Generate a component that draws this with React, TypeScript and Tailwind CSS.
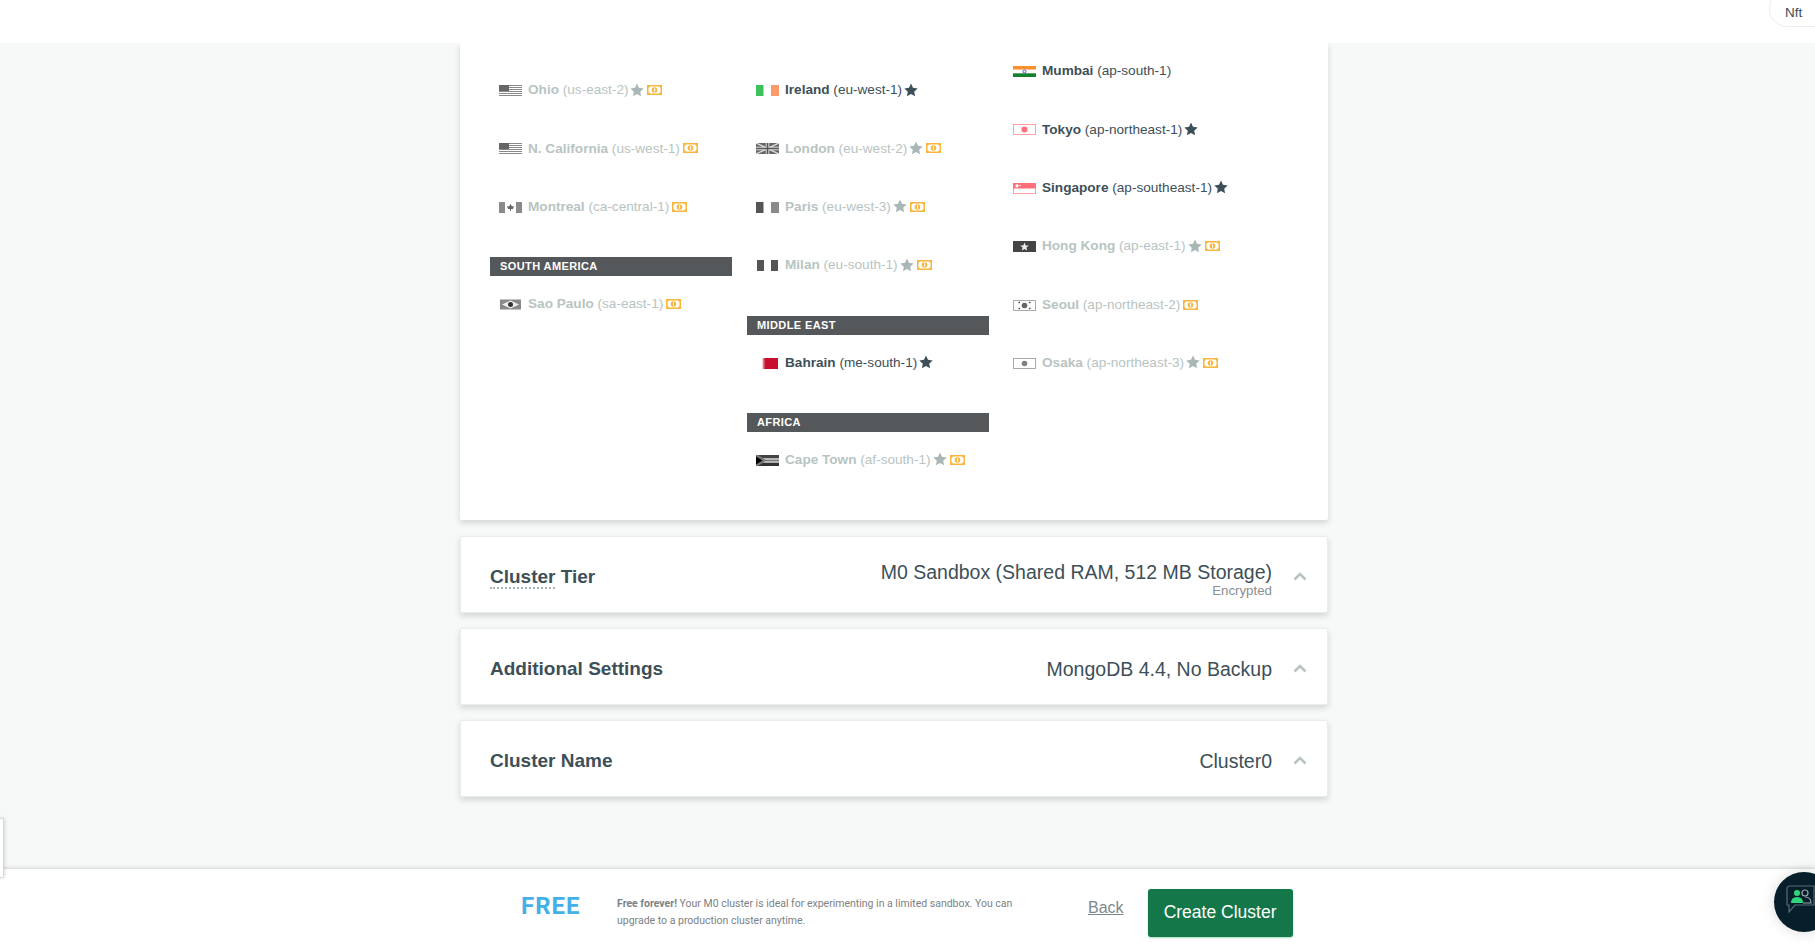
const GREY = '#8a8a8a'
const DARK = '#555555'

const Flag = ({ name }: { name: string }) => {
  const art: Record<string, React.ReactNode> = {
    us: (
      <>
        <rect width="23" height="11" fill="#fff" />
        {[0, 2, 4, 6, 8, 10].map((y) => <rect key={y} y={y} width="23" height="1" fill={GREY} />)}
        <rect width="10" height="6" fill="#666" />
      </>
    ),
    ca: (
      <>
        <rect width="6" height="11" fill={GREY} />
        <rect x="17" width="6" height="11" fill={GREY} />
        <path d="M11.5 2 L13 4.5 L15 4 L14 7 L12 7 L12 9 L11 9 L11 7 L9 7 L8 4 L10 4.5 Z" fill="#666" />
      </>
    ),
    br: (
      <>
        <rect x="1" y="0.5" width="21" height="10" fill={GREY} />
        <path d="M11.5 1.5 L20 5.5 L11.5 9.5 L3 5.5 Z" fill="#eee" />
        <circle cx="11.5" cy="5.5" r="2.5" fill="#333" />
      </>
    ),
    ie: (
      <>
        <rect width="7.5" height="11" fill="#3ec15c" />
        <rect x="15" width="8" height="11" fill="#fd9a6c" />
      </>
    ),
    uk: (
      <>
        <rect width="23" height="11" fill="#666" />
        <path d="M0 0 L23 11 M23 0 L0 11" stroke="#ddd" strokeWidth="1.4" />
        <path d="M11.5 0 V11 M0 5.5 H23" stroke="#ddd" strokeWidth="3.5" />
        <path d="M11.5 0 V11 M0 5.5 H23" stroke="#555" strokeWidth="1.6" />
      </>
    ),
    fr: (
      <>
        <rect width="7.5" height="11" fill={DARK} />
        <rect x="15" width="8" height="11" fill={GREY} />
      </>
    ),
    it: (
      <>
        <rect x="1" width="7" height="11" fill={DARK} />
        <rect x="15" width="7" height="11" fill={DARK} />
      </>
    ),
    bh: (
      <>
        <rect x="8" y="0" width="14" height="11" fill="#c8102e" />
        <path d="M6 0 L8 1 L6 2 L8 3 L6 4 L8 5 L6 6 L8 7 L6 8 L8 9 L6 10 L8 11 L9 11 L9 0 Z" fill="#d8475c" />
      </>
    ),
    za: (
      <>
        <rect width="23" height="11" fill="#fff" />
        <rect width="23" height="3.4" fill="#444" />
        <rect y="7.6" width="23" height="3.4" fill="#333" />
        <path d="M0 0 L2 0 L9 4.4 H23 V6.6 H9 L2 11 H0 Z" fill="#777" />
        <path d="M0 1.5 L6.5 5.5 L0 9.5 Z" fill="#000" />
      </>
    ),
    in: (
      <>
        <rect width="23" height="3.7" fill="#fb8f2c" />
        <rect y="3.7" width="23" height="3.6" fill="#fff" />
        <rect y="7.3" width="23" height="3.7" fill="#15812d" />
        <circle cx="11.5" cy="5.5" r="1.5" fill="none" stroke="#3440c9" strokeWidth="0.9" />
      </>
    ),
    jp: (
      <>
        <rect x="0.5" y="0.5" width="22" height="10" fill="#fff" stroke="#ff9ea3" />
        <circle cx="11.5" cy="5.5" r="3" fill="#ff6f78" />
      </>
    ),
    sg: (
      <>
        <rect x="0.5" y="0.5" width="22" height="10" fill="#fff" stroke="#ff9ea3" />
        <rect width="23" height="5.5" fill="#ff7078" />
        <circle cx="4" cy="2.8" r="1.6" fill="#fff" />
        <circle cx="7" cy="2.5" r="0.7" fill="#fff" />
      </>
    ),
    hk: (
      <>
        <rect width="23" height="11" fill="#444" />
        <path d="M11.5 1.5 L12.7 4.5 L15.8 4.6 L13.4 6.6 L14.2 9.5 L11.5 7.9 L8.8 9.5 L9.6 6.6 L7.2 4.6 L10.3 4.5 Z" fill="#eee" />
      </>
    ),
    kr: (
      <>
        <rect x="0.5" y="0.5" width="22" height="10" fill="#fff" stroke="#aaa" />
        <circle cx="11.5" cy="5.5" r="2.8" fill="#666" />
        <path d="M5.5 3 L7 2 M5.5 8 L7 9 M17.5 3 L16 2 M17.5 8 L16 9" stroke="#444" strokeWidth="1.3" />
      </>
    ),
    os: (
      <>
        <rect x="0.5" y="0.5" width="22" height="10" fill="#fff" stroke="#aaa" />
        <circle cx="11.5" cy="5.5" r="2.8" fill="#808080" />
      </>
    ),
  }
  return (
    <svg width="23" height="11" viewBox="0 0 23 11" className="shrink-0">
      {art[name]}
    </svg>
  )
}

const Star = ({ on }: { on: boolean }) => (
  <svg width="14" height="14" viewBox="0 0 24 24" className="ml-[2px] -mt-[2px] shrink-0">
    <path
      d="M12 1 L15.4 8.3 L23.4 9.3 L17.5 14.8 L19 22.8 L12 18.9 L5 22.8 L6.5 14.8 L0.6 9.3 L8.6 8.3 Z"
      fill={on ? '#3d4f58' : '#a9b8b6'}
    />
  </svg>
)

const Cash = () => (
  <svg width="15" height="10" viewBox="0 0 15 10" className="ml-[3px] -mt-[1px] shrink-0">
    <rect width="15" height="10" fill="#f8b63f" />
    <path d="M3 1.5 H12 L13.5 3 V7 L12 8.5 H3 L1.5 7 V3 Z" fill="#fff" />
    <circle cx="7.5" cy="5" r="2.8" fill="#f8b63f" />
    <rect x="7" y="3.3" width="1.1" height="3.4" fill="#fff" />
  </svg>
)

type Region = { flag: string; city: string; code: string; star?: boolean; cash?: boolean; off?: boolean }

const Row = ({ r }: { r: Region }) => (
  <div className="flex h-[34px] mb-[24.4px] items-center pl-[9px] pt-[1px] text-[13.6px] whitespace-nowrap">
    <Flag name={r.flag} />
    <span className={`ml-[6px] ${r.off ? 'text-[#b8c4c2]' : 'text-[#3d4f58]'}`}>
      <span className="font-bold">{r.city}</span> ({r.code})
    </span>
    {r.star && <Star on={!r.off} />}
    {r.cash && <Cash />}
  </div>
)

const Band = ({ label }: { label: string }) => (
  <div className="h-[19px] mt-[33.4px] mb-[11px] bg-[#55585a] pl-[10px] text-[11px] leading-[19px] font-bold tracking-[0.4px] text-white">
    {label}
  </div>
)

const Section = ({ children, value }: { children: React.ReactNode; value: React.ReactNode }) => (
  <div className="flex h-[77px] mb-[15px] items-center justify-between rounded-[2px] border border-[#e7eeec] bg-white pl-[29px] pr-[20px] pt-[6px] shadow-[0_3px_6px_rgba(0,0,0,0.15)]">
    <div className="text-[19px] font-bold text-[#3d4f58]">{children}</div>
    <div className="flex items-center">
      <div className="text-right text-[#3d4f58]">{value}</div>
      <svg width="14" height="9" viewBox="0 0 14 9" className="ml-[21px] -mt-[3px]">
        <path d="M1.5 7.5 L7 2 L12.5 7.5" fill="none" stroke="#b8c4c2" strokeWidth="2.6" />
      </svg>
    </div>
  </div>
)

const App = () => {
  return (
    <div className="relative flex h-screen flex-col overflow-hidden bg-[#f7f9f8] font-['Liberation_Sans',sans-serif]">
      <div className="flex h-[43px] shrink-0 justify-end overflow-hidden bg-white">
        <div className="-mt-[10px] -mr-[30px] flex h-[37px] w-[76px] items-center rounded-[18px] border border-[#e7eeec] pl-[15px] pt-[9px] text-[13.5px] text-[#3d4f58]">
          Nft
        </div>
      </div>

      <div className="min-h-0 flex-1 overflow-hidden">
        <div className="ml-[460px] w-[868px]">
          <div className="mb-4 grid h-[477px] grid-cols-[257px_257px_257px] rounded-b-[2px] bg-white pl-[30px] shadow-[0_3px_6px_rgba(0,0,0,0.15)]">
            <div className="w-[242px] pt-[30px]">
              <Row r={{ flag: 'us', city: 'Ohio', code: 'us-east-2', star: true, cash: true, off: true }} />
              <Row r={{ flag: 'us', city: 'N. California', code: 'us-west-1', cash: true, off: true }} />
              <Row r={{ flag: 'ca', city: 'Montreal', code: 'ca-central-1', cash: true, off: true }} />
              <Band label="SOUTH AMERICA" />
              <Row r={{ flag: 'br', city: 'Sao Paulo', code: 'sa-east-1', cash: true, off: true }} />
            </div>
            <div className="w-[242px] pt-[30px]">
              <Row r={{ flag: 'ie', city: 'Ireland', code: 'eu-west-1', star: true }} />
              <Row r={{ flag: 'uk', city: 'London', code: 'eu-west-2', star: true, cash: true, off: true }} />
              <Row r={{ flag: 'fr', city: 'Paris', code: 'eu-west-3', star: true, cash: true, off: true }} />
              <Row r={{ flag: 'it', city: 'Milan', code: 'eu-south-1', star: true, cash: true, off: true }} />
              <Band label="MIDDLE EAST" />
              <Row r={{ flag: 'bh', city: 'Bahrain', code: 'me-south-1', star: true }} />
              <Band label="AFRICA" />
              <Row r={{ flag: 'za', city: 'Cape Town', code: 'af-south-1', star: true, cash: true, off: true }} />
            </div>
            <div className="w-[242px] pt-[11px]">
              <Row r={{ flag: 'in', city: 'Mumbai', code: 'ap-south-1' }} />
              <Row r={{ flag: 'jp', city: 'Tokyo', code: 'ap-northeast-1', star: true }} />
              <Row r={{ flag: 'sg', city: 'Singapore', code: 'ap-southeast-1', star: true }} />
              <Row r={{ flag: 'hk', city: 'Hong Kong', code: 'ap-east-1', star: true, cash: true, off: true }} />
              <Row r={{ flag: 'kr', city: 'Seoul', code: 'ap-northeast-2', cash: true, off: true }} />
              <Row r={{ flag: 'os', city: 'Osaka', code: 'ap-northeast-3', star: true, cash: true, off: true }} />
            </div>
          </div>

          <Section
            value={
              <div className="pt-[3px]">
                <div className="text-[19.5px] leading-[22px]">M0 Sandbox (Shared RAM, 512 MB Storage)</div>
                <div className="text-[13.3px] leading-[15px] text-[#8a8f91]">Encrypted</div>
              </div>
            }
          >
            <span className="border-b-2 border-dotted border-[#a9b4b4]">Cluster</span> Tier
          </Section>
          <Section value={<div className="text-[19.5px]">MongoDB 4.4, No Backup</div>}>Additional Settings</Section>
          <Section value={<div className="text-[19.5px]">Cluster0</div>}>Cluster Name</Section>
        </div>
      </div>

      <div className="flex h-[83px] shrink-0 items-center bg-white pl-[521px] shadow-[0_-1px_4px_rgba(0,0,0,0.15)]">
        <div className="mb-[9px] w-[96px] font-['Roboto',sans-serif] text-[24px] font-bold tracking-[1px] text-[#43b1e5]">FREE</div>
        <div className="mt-[2px] w-[471px] pr-[60px] font-['Roboto',sans-serif] text-[10.5px] leading-[17px] text-[#7d8183]">
          <span className="font-bold">Free forever!</span> Your M0 cluster is ideal for experimenting in a limited sandbox. You can upgrade to a production cluster anytime.
        </div>
        <a className="mb-[5px] text-[16px] text-[#7c8a8c] underline">Back</a>
        <button className="ml-[24px] mt-[4px] h-12 w-[145px] rounded-[3px] bg-[#13774a] text-[17.5px] text-white shadow-[0_1px_2px_rgba(19,170,82,0.4)]">
          Create Cluster
        </button>
      </div>

      {/* left edge widget */}
      <div className="absolute left-0 top-[818px] h-[60px] w-[4px] rounded-r-[2px] border border-l-0 border-[#d5d8d8] bg-white shadow-[0_0_4px_rgba(0,0,0,0.2)]" />

      {/* chat bubble */}
      <div className="absolute left-[1774px] top-[872px] h-[60px] w-[60px] rounded-full bg-[#061f2b] shadow-[0_0_14px_rgba(0,0,0,0.15)]">
        <svg width="60" height="60" viewBox="0 0 60 60">
          <path d="M16 14 H40 V33 H21 L15 40 V33 H13 V17 Q13 14 16 14 Z" fill="none" stroke="#5a6b72" strokeWidth="1.2" />
          <circle cx="23" cy="21" r="3" fill="#2fd67b" />
          <path d="M17 31 Q17 25 23 25 Q29 25 29 31 Z" fill="#2fd67b" />
          <circle cx="31" cy="21" r="3" fill="none" stroke="#9aa7ab" strokeWidth="1.2" />
          <path d="M29 31 H37 Q37 25 31 25" fill="none" stroke="#9aa7ab" strokeWidth="1.2" />
        </svg>
      </div>
    </div>
  )
}

export default App
